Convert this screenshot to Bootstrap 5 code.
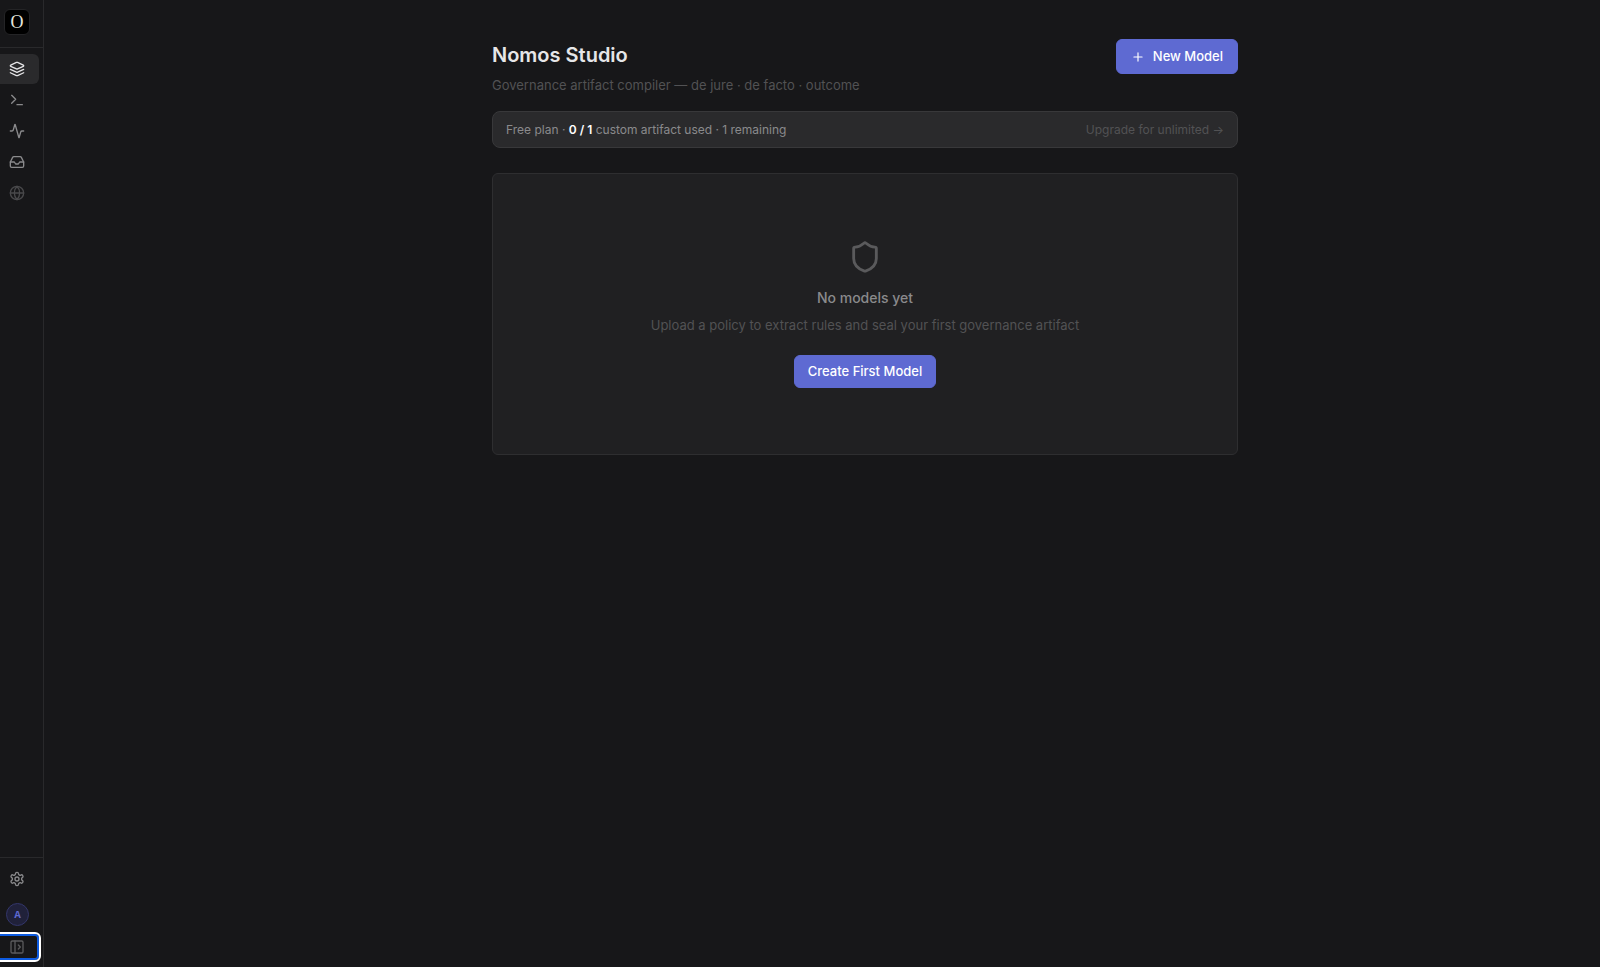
<!DOCTYPE html>
<html lang="en" data-bs-theme="dark">
<head>
<meta charset="utf-8">
<meta name="viewport" content="width=device-width, initial-scale=1">
<title>Nomos Studio</title>
<link href="https://cdn.jsdelivr.net/npm/bootstrap@5.3.0/dist/css/bootstrap.min.css" rel="stylesheet">
<style>
  body { background: #171719; font-family: Inter, "Liberation Sans", sans-serif; font-size: 13px; line-height: 20px; color: #8a8a8c; }
  svg { display: block; fill: none; stroke: currentColor; stroke-width: 2; stroke-linecap: round; stroke-linejoin: round; }
  .rail { width: 44px; border-right: 1px solid #29292b; background: #171719; }
  .rail-head { height: 48px; padding: 9px 0 0 4px; border-bottom: 1px solid #29292b; }
  .logo { width: 26px; height: 26px; background: #000; border: 1px solid #242426; border-radius: 6px; color: #e6e6dc; font: 18px "Liberation Serif", serif; text-decoration: none; }
  .rail-nav { padding-top: 6px; gap: 1px; }
  .rail-item { width: 39px; height: 30px; padding: 0 0 0 9px; border: 0; border-radius: 0 6px 6px 0; background: none; color: #8a8a8c; }
  .rail-item svg { width: 16px; height: 16px; stroke-width: 2; }
  .rail-item.active { background: #2a2a2c; color: #e4e4e6; }
  .rail-item.dim { color: #49494b; }
  .rail-foot { border-top: 1px solid #29292b; padding: 6px 0 5px; }
  .avatar { width: 23px; height: 23px; margin: 9px 0 8px 6px; border: 1px solid #33366a; border-radius: 50%; background: #20213a; color: #5e6ad2; font: 700 11px "Liberation Mono", monospace; }
  .toggle { width: 39px; height: 26px; margin: 2px 0; border-radius: 0 4px 4px 0; background: #171719; border: 2px solid #0d5be1; border-left: 0; outline: 2px solid #fff; color: #5a5a5c; }
  .workspace { padding: 39px 0 40px 86px; }
  .content { max-width: 746px; }
  h1 { font-size: 20px; line-height: 32px; font-weight: 600; color: #e6e6e8; }
  .muted { color: #525254; }
  .shield { color: #5a5a5c; }
  .btn-accent { --bs-btn-color: #fff; --bs-btn-bg: #5e6ad2; --bs-btn-border-color: #5e6ad2; --bs-btn-hover-color: #fff; --bs-btn-hover-bg: #6d78dc; --bs-btn-hover-border-color: #6d78dc; --bs-btn-font-size: 13px; --bs-btn-font-weight: 500; --bs-btn-line-height: 21px; --bs-btn-border-radius: 6px; --bs-btn-padding-x: 13px; --bs-btn-padding-y: 5px; }
  .btn-new { --bs-btn-padding-x: 14px; --bs-btn-padding-y: 6px; }
  .plan { margin-top: 16px; padding: 8px 13px; background: #2a2a2c; border: 1px solid #38383a; border-radius: 8px; font-size: 12px; line-height: 19px; }
  .plan strong { color: #fff; font-weight: 600; }
  .empty { margin-top: 25px; padding: 66px 16px; background: #202022; border: 1px solid #2e2e30; border-radius: 6px; }
  .empty h2 { font-size: 14px; line-height: 22px; font-weight: 500; margin: 13px 0 6px; color: #8a8a8c; }
  .empty p { margin: 0 0 20px; }
</style>
</head>
<body>
<div class="d-flex min-vh-100">
  <aside class="rail d-flex flex-column flex-shrink-0">
    <div class="rail-head"><a class="logo d-flex align-items-center justify-content-center" href="#" aria-label="Home">O</a></div>
    <nav class="rail-nav d-flex flex-column flex-grow-1" aria-label="Main">
      <a href="#" class="rail-item active d-flex align-items-center" aria-label="Models"><svg viewBox="0 0 24 24"><path d="m12.83 2.18a2 2 0 0 0-1.66 0L2.6 6.08a1 1 0 0 0 0 1.83l8.58 3.91a2 2 0 0 0 1.66 0l8.58-3.9a1 1 0 0 0 0-1.83Z"/><path d="m22 17.65-9.17 4.16a2 2 0 0 1-1.66 0L2 17.65"/><path d="m22 12.65-9.17 4.16a2 2 0 0 1-1.66 0L2 12.65"/></svg></a>
      <a href="#" class="rail-item d-flex align-items-center" aria-label="Console"><svg viewBox="0 0 24 24"><path d="m4 17 6-6-6-6M12 19h8"/></svg></a>
      <a href="#" class="rail-item d-flex align-items-center" aria-label="Activity"><svg viewBox="0 0 24 24"><path d="M22 12h-2.48a2 2 0 0 0-1.93 1.46l-2.35 8.36a.25.25 0 0 1-.48 0L9.24 2.18a.25.25 0 0 0-.48 0l-2.35 8.36A2 2 0 0 1 4.49 12H2"/></svg></a>
      <a href="#" class="rail-item d-flex align-items-center" aria-label="Inbox"><svg viewBox="0 0 24 24"><path d="M22 12h-6l-2 3h-4l-2-3H2"/><path d="M5.45 5.11 2 12v6a2 2 0 0 0 2 2h16a2 2 0 0 0 2-2v-6l-3.45-6.89A2 2 0 0 0 16.76 4H7.24a2 2 0 0 0-1.79 1.11z"/></svg></a>
      <a href="#" class="rail-item dim d-flex align-items-center" aria-label="Network"><svg viewBox="0 0 24 24"><circle cx="12" cy="12" r="10"/><path d="M12 2a14.5 14.5 0 0 0 0 20 14.5 14.5 0 0 0 0-20M2 12h20"/></svg></a>
    </nav>
    <div class="rail-foot">
      <a href="#" class="rail-item d-flex align-items-center" aria-label="Settings"><svg viewBox="0 0 24 24"><path d="M12.22 2h-.44a2 2 0 0 0-2 2v.18a2 2 0 0 1-1 1.73l-.43.25a2 2 0 0 1-2 0l-.15-.08a2 2 0 0 0-2.73.73l-.22.38a2 2 0 0 0 .73 2.73l.15.1a2 2 0 0 1 1 1.72v.51a2 2 0 0 1-1 1.74l-.15.09a2 2 0 0 0-.73 2.73l.22.38a2 2 0 0 0 2.73.73l.15-.08a2 2 0 0 1 2 0l.43.25a2 2 0 0 1 1 1.73V20a2 2 0 0 0 2 2h.44a2 2 0 0 0 2-2v-.18a2 2 0 0 1 1-1.73l.43-.25a2 2 0 0 1 2 0l.15.08a2 2 0 0 0 2.73-.73l.22-.39a2 2 0 0 0-.73-2.73l-.15-.08a2 2 0 0 1-1-1.74v-.5a2 2 0 0 1 1-1.74l.15-.09a2 2 0 0 0 .73-2.73l-.22-.38a2 2 0 0 0-2.73-.73l-.15.08a2 2 0 0 1-2 0l-.43-.25a2 2 0 0 1-1-1.73V4a2 2 0 0 0-2-2z"/><circle cx="12" cy="12" r="3"/></svg></a>
      <button type="button" class="avatar d-flex align-items-center justify-content-center p-0">A</button>
      <button type="button" class="rail-item toggle d-flex align-items-center" aria-label="Expand sidebar"><svg viewBox="0 0 24 24"><rect x="3" y="3" width="18" height="18" rx="2"/><path d="M9 3v18M14 9l3 3-3 3"/></svg></button>
    </div>
  </aside>
  <main class="workspace flex-grow-1">
    <div class="content mx-auto">
      <header class="d-flex justify-content-between align-items-start">
        <div>
          <h1 class="mb-1">Nomos Studio</h1>
          <p class="muted mb-0">Governance artifact compiler — de jure · de facto · outcome</p>
        </div>
        <button type="button" class="btn btn-accent btn-new d-flex align-items-center gap-2"><svg width="14" height="14" viewBox="0 0 24 24"><path d="M5 12h14M12 5v14"/></svg>New Model</button>
      </header>
      <div class="plan d-flex justify-content-between">
        <span>Free plan · <strong>0 / 1</strong> custom artifact used · 1 remaining</span>
        <a href="#" class="muted text-decoration-none">Upgrade for unlimited →</a>
      </div>
      <section class="empty d-flex flex-column align-items-center text-center">
        <svg class="shield" width="34" height="34" viewBox="0 0 24 24"><path d="M20 13c0 5-3.500 7.500-7.660 8.950a1 1 0 0 1-.67-.01C7.500 20.500 4 18 4 13V6a1 1 0 0 1 1-1c2 0 4.500-1.200 6.240-2.720a1.170 1.170 0 0 1 1.520 0C14.510 3.810 17 5 19 5a1 1 0 0 1 1 1z"/></svg>
        <h2>No models yet</h2>
        <p class="muted">Upload a policy to extract rules and seal your first governance artifact</p>
        <button type="button" class="btn btn-accent">Create First Model</button>
      </section>
    </div>
  </main>
</div>
<script src="https://cdn.jsdelivr.net/npm/bootstrap@5.3.0/dist/js/bootstrap.bundle.min.js"></script>
</body>
</html>
